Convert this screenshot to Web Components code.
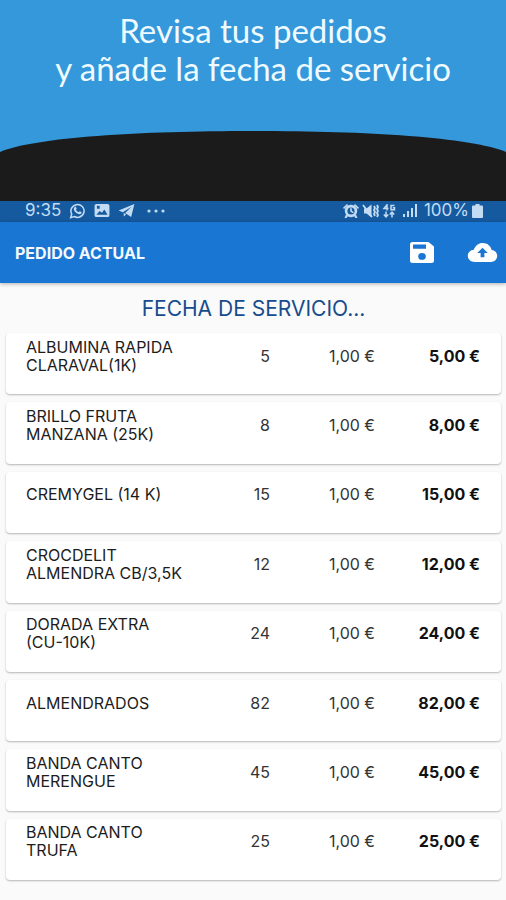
<!DOCTYPE html>
<html lang="es">
<head>
<meta charset="utf-8">
<meta name="viewport" content="width=device-width, initial-scale=1">
<title>Pedido actual</title>
<style>
  html, body { margin: 0; }
  body { font-family: Inter, Roboto, sans-serif; background: #fafafa; color: #1c1c1c; }
</style>
</head>
<body>
<order-screen>
  <promo-banner slot="banner">Revisa tus pedidos<br>y añade la fecha de servicio</promo-banner>
  <status-bar slot="status"></status-bar>
  <app-bar slot="bar">PEDIDO ACTUAL</app-bar>
  <service-date>FECHA DE SERVICIO...</service-date>
  <order-table></order-table>
</order-screen>

<script>
const define = (name, html, setup) => {
  const template = document.createElement('template');
  template.innerHTML = html;
  customElements.define(name, class extends HTMLElement {
    constructor() {
      super();
      this.attachShadow({ mode: 'open' }).append(template.content.cloneNode(true));
      if (setup) setup(this.shadowRoot);
    }
  });
};

define('order-screen', `
  <style>
    :host { display: flex; flex-direction: column; min-height: 100vh; }
    main { flex: 1; display: flex; flex-direction: column; padding: 0 5px 20px 6px; }
    ::slotted(order-table) { flex: 1; }
  </style>
  <slot name="banner"></slot>
  <slot name="status"></slot>
  <slot name="bar"></slot>
  <main><slot></slot></main>
`);

define('promo-banner', `
  <style>
    :host { display: block; background: #3498db; }
    h1 { margin: 0; padding: 11px 0 44px; font: 400 33px/38px Lato, sans-serif; color: #f0fbff; text-align: center; }
    svg { display: block; width: 100%; height: 70px; }
  </style>
  <h1><slot></slot></h1>
  <svg viewBox="0 0 506 70" preserveAspectRatio="none" aria-hidden="true">
    <path fill="#1b1b1b" d="M0 21C36 6 140 0 253 0S470 6 506 21V70H0Z"/>
  </svg>
`);

define('status-bar', `
  <style>
    :host { display: flex; justify-content: space-between; align-items: flex-start; height: 21px; padding: 0 23px 0 25px; background: #155a9f; color: #c3dcf3; font-size: 17px; line-height: 19px; }
    div { display: flex; align-items: center; }
    .left { gap: 8px; }
    .right { gap: 3px; }
    .more { margin-left: 4px; }
    .signal { margin: 0 4px; }
    svg { display: block; fill: currentColor; }
  </style>
  <div class="left">
    <span>9:35</span>
    <svg width="17" height="16" viewBox="0 0 18 18" aria-hidden="true">
      <path fill="none" stroke="currentColor" stroke-width="1.7" d="M1.300 16.500 2.500 12.400A7.400 7.200 0 1 1 5.300 15.200Z"/>
      <path d="M6 4.600c.5-.5 1.100-.4 1.400.2l.6 1.500c.1.400-.5.900-.8 1.300.7 1.400 1.700 2.300 3.200 2.900.5-.4.800-1.100 1.200-1.100l1.700.8c.4.200.3.900 0 1.400-.8 1.300-2.600 1.200-4 .6C7 11.200 5.500 9.500 5 7.600 4.700 6.500 5.100 5.400 6 4.600Z"/>
    </svg>
    <svg width="16" height="13" viewBox="0 0 16 14" aria-hidden="true">
      <path fill-rule="evenodd" d="M2 0h12a2 2 0 0 1 2 2v10a2 2 0 0 1-2 2H2a2 2 0 0 1-2-2V2A2 2 0 0 1 2 0ZM2 11.500h12L10.500 6 8 9.500 5.500 7.500ZM2.500 2v3h3V2Z"/>
    </svg>
    <svg width="17" height="13" viewBox="0 0 17 14" aria-hidden="true">
      <path d="M17 0 0 7l4.500 1.800L14 3 7 9.800 13.500 14ZM5.500 9.500v4L8 11.200Z"/>
    </svg>
    <svg class="more" width="18" height="4" viewBox="0 0 18 4" aria-hidden="true">
      <circle cx="2" cy="2" r="1.600"/><circle cx="9" cy="2" r="1.600"/><circle cx="16" cy="2" r="1.600"/>
    </svg>
  </div>
  <div class="right">
    <svg width="16" height="14" viewBox="0 0 16 14" aria-hidden="true">
      <path fill-rule="evenodd" d="M8 .8a6.200 6.200 0 1 1 0 12.400A6.200 6.200 0 0 1 8 .8ZM8 3.400a3.600 3.600 0 1 0 0 7.200 3.600 3.600 0 0 0 0-7.200Z"/>
      <path d="M0 3.700 4 0l1.200 1.200L1 5ZM16 3.700 12 0l-1.200 1.200L15 5ZM7.200 4.200h1.600v2.600l2 1.200-.8 1.300-2.800-1.700ZM3 10.500l2 1.500-1.500 2H1.500ZM13 10.500 11 12l1.500 2h2Z"/>
    </svg>
    <svg width="17" height="14" viewBox="0 0 17 14" aria-hidden="true">
      <path d="M2 4.500h2.500L9.500.5v13L4.500 9.500H2Z"/>
      <path fill="none" stroke="currentColor" stroke-width="1.800" d="M1 1 10 13M12 2l1 2-1 2 1 2-1 2 1 2M15 1l1 2-1 2 1 2-1 2 1 2-1 2"/>
    </svg>
    <svg width="14" height="14" viewBox="0 0 14 14" role="img" aria-label="4G">
      <path fill="none" stroke="currentColor" stroke-width="1.500" d="M5 6.500V.8L2 4.500H6.500M12.500 1.500H9V5.800H12.500V3.800H10.800M4 7.500v5M1.800 10.500 4 12.800l2.200-2.300M10 13.500V8.500M7.800 10.500 10 8.200l2.200 2.300"/>
    </svg>
    <svg class="signal" width="14" height="13" viewBox="0 0 14 13" aria-hidden="true">
      <path d="M0 10h2v3H0ZM4 7h2v6H4ZM8 4h2v9H8ZM12 0h2v13h-2Z"/>
    </svg>
    <span>100%</span>
    <svg width="11" height="14" viewBox="0 0 11 14" aria-hidden="true">
      <path d="M3.500 0h4v1.500H10a1 1 0 0 1 1 1V13a1 1 0 0 1-1 1H1a1 1 0 0 1-1-1V2.500a1 1 0 0 1 1-1h2.500Z"/>
    </svg>
  </div>
`);

define('app-bar', `
  <style>
    :host { display: flex; align-items: center; height: 61px; padding: 0 8px 0 15px; background: #1976d2; color: #f4faff; box-shadow: 0 1px 4px rgba(0, 0, 0, .3); }
    h2 { flex: 1; margin: 0; font-size: 16px; line-height: 20px; font-weight: 700; }
    div { display: flex; align-items: center; gap: 33px; }
    button { display: block; padding: 0; border: 0; background: none; color: #fff; }
    svg { display: block; fill: currentColor; }
  </style>
  <h2><slot></slot></h2>
  <div>
    <button type="button" aria-label="Guardar">
      <svg width="24" height="21" viewBox="0 0 24 21">
        <path fill-rule="evenodd" d="M2.500 0H18.500L24 4.500V18.500A2.500 2.500 0 0 1 21.500 21H2.500A2.500 2.500 0 0 1 0 18.500V2.500A2.500 2.500 0 0 1 2.500 0ZM3 2.500V6.800H16V2.500ZM12 11A3.800 3.400 0 1 0 12 17.800 3.800 3.400 0 0 0 12 11Z"/>
      </svg>
    </button>
    <button type="button" aria-label="Subir">
      <svg width="31" height="19" viewBox="0 0 31 20">
        <path fill-rule="evenodd" d="M7.500 20C3.200 20 0 17.300 0 13.500 0 10 2.800 7.300 6.300 7 8 2.800 11.500 0 15.500 0c5 0 8.800 3 9.600 7.300 3.300.3 5.900 2.800 5.900 6.200 0 3.700-3 6.500-6.700 6.500ZM15.500 5 10 10.500h3.500V15h4v-4.500H21Z"/>
      </svg>
    </button>
  </div>
`);

define('service-date', `
  <style>
    :host { display: flex; justify-content: center; padding: 12px 0 10px; }
    button { padding: 0; border: 0; background: none; font: 400 21px/28px Inter, sans-serif; color: #174c8c; }
  </style>
  <button type="button"><slot></slot></button>
`);

const orders = [
  ['ALBUMINA RAPIDA\nCLARAVAL(1K)', 5],
  ['BRILLO FRUTA\nMANZANA (25K)', 8],
  ['CREMYGEL (14 K)', 15],
  ['CROCDELIT\nALMENDRA CB/3,5K', 12],
  ['DORADA EXTRA\n(CU-10K)', 24],
  ['ALMENDRADOS', 82],
  ['BANDA CANTO\nMERENGUE', 45],
  ['BANDA CANTO\nTRUFA', 25],
];

define('order-table', `
  <style>
    :host { display: grid; }
    table { display: grid; font-size: 16px; line-height: 18px; }
    tbody { display: grid; grid-auto-rows: 1fr; gap: 8px; }
    tr { display: grid; grid-template-columns: 170fr 74fr 105fr 105fr; align-items: center; padding: 4px 21px 20px 20px; background: #fff; border-radius: 4px; box-shadow: 0 1px 2px rgba(0, 0, 0, .28); }
    th, td { padding: 0; font-weight: 400; text-align: right; white-space: nowrap; }
    th { text-align: left; white-space: pre; }
    td { color: #333; }
    .total { font-weight: 700; color: #111; }
  </style>
  <table aria-label="Líneas del pedido"><tbody></tbody></table>
`, root => {
  const body = root.querySelector('tbody');
  for (const [name, quantity] of orders) {
    const row = body.insertRow();
    const head = document.createElement('th');
    head.scope = 'row';
    head.textContent = name;
    row.append(head);
    row.insertCell().textContent = quantity;
    row.insertCell().textContent = '1,00 €';
    const total = row.insertCell();
    total.className = 'total';
    total.textContent = quantity + ',00 €';
  }
});
</script>
</body>
</html>
